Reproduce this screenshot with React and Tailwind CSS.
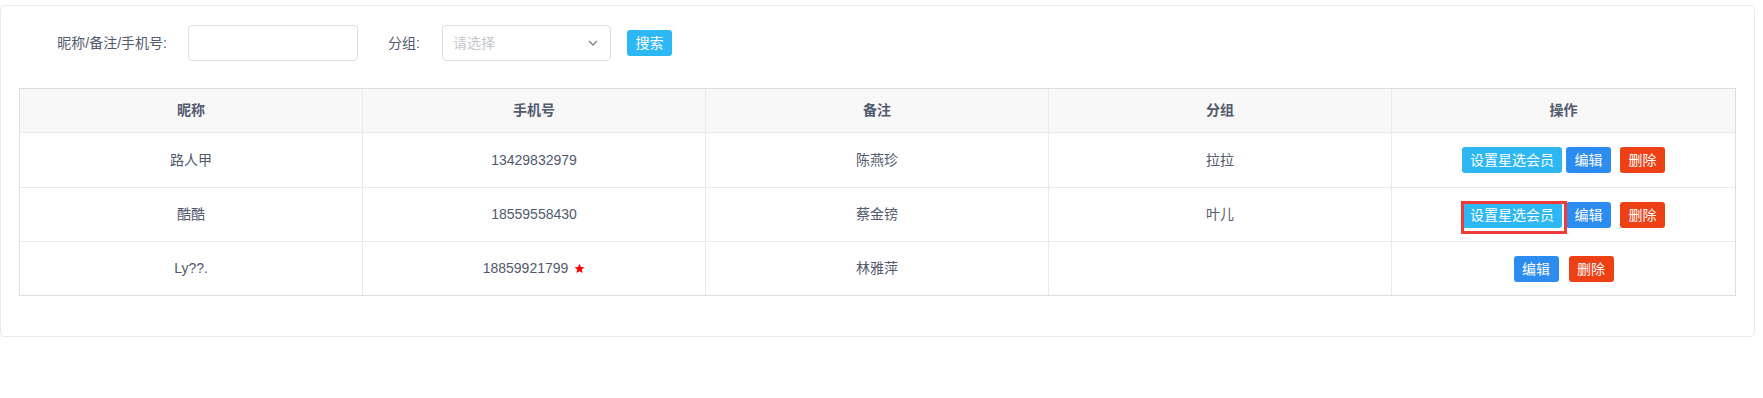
import { useState } from 'react'

const rows = [
  { nick: '路人甲', phone: '13429832979', note: '陈燕珍', group: '拉拉', star: false, setStar: true },
  { nick: '酷酷', phone: '18559558430', note: '蔡金镑', group: '叶儿', star: false, setStar: true, marked: true },
  { nick: 'Ly??.', phone: '18859921799', note: '林雅萍', group: '', star: true, setStar: false },
]

const rowHeights = ['h-[55px]', 'h-[54px]', 'h-[53px]']

const cols = ['昵称', '手机号', '备注', '分组', '操作']

const Star = () => (
  <svg viewBox="0 0 24 24" className="ml-[6px] inline-block h-[11px] w-[11px] align-[-1px]">
    <path fill="#ff0000" d="M12 1.5l3.1 7.1 7.7.7-5.8 5.1 1.7 7.6L12 18l-6.7 4 1.7-7.6-5.8-5.1 7.7-.7z" />
  </svg>
)

const Btn = ({ color, width, children, className = '' }) => (
  <button
    type="button"
    className={`inline-flex h-[26px] items-center justify-center rounded-[3px] text-[14px] leading-none text-white ${color} ${width} ${className}`}
  >
    {children}
  </button>
)

export default function App() {
  const [keyword, setKeyword] = useState('')

  return (
    <div className="min-h-[398px] bg-white pt-[5px] font-['Liberation_Sans','Noto_Sans_CJK_SC',sans-serif] text-[14px] text-[#515a6e]">
      <div className="h-[332px] w-[1755px] rounded-[4px] border border-[#e8eaec] bg-white px-[18px] pt-[19px]">
        {/* search bar */}
        <div className="flex h-[36px] items-center">
          <label className="w-[148px] text-right leading-none">昵称/备注/手机号:</label>
          <input
            value={keyword}
            onChange={(e) => setKeyword(e.target.value)}
            className="ml-[21px] h-[36px] w-[170px] rounded-[4px] border border-[#dcdee2] bg-white px-[10px] text-[14px] outline-none"
          />
          <label className="w-[62px] text-right leading-none">分组:</label>
          <div className="ml-[22px] flex h-[36px] w-[169px] items-center justify-between rounded-[4px] border border-[#dcdee2] bg-white pl-[10px] pr-[11px]">
            <span className="text-[14px] leading-none text-[#c5c8ce]">请选择</span>
            <svg viewBox="0 0 12 12" className="h-[12px] w-[12px]">
              <path d="M2 4l4 4 4-4" fill="none" stroke="#808695" strokeWidth="1.4" />
            </svg>
          </div>
          <Btn color="bg-[#2db7f5]" width="w-[45px]" className="ml-[16px]">
            搜索
          </Btn>
        </div>

        {/* table */}
        <div className="mt-[27px] w-[1717px] border border-[#dcdee2]">
          <table className="w-full table-fixed border-separate border-spacing-0">
            <thead>
              <tr className="h-[44px] bg-[#f8f8f9]">
                {cols.map((c, i) => (
                  <th
                    key={c}
                    className={`border-b border-[#e8eaec] text-center text-[14px] font-bold ${i < 4 ? 'border-r' : ''}`}
                  >
                    {c}
                  </th>
                ))}
              </tr>
            </thead>
            <tbody>
              {rows.map((r, ri) => {
                const last = ri === rows.length - 1
                const cell = `text-center ${last ? '' : 'border-b'} border-[#e8eaec]`
                return (
                  <tr key={r.phone} className={rowHeights[ri]}>
                    <td className={`${cell} border-r`}>{r.nick}</td>
                    <td className={`${cell} border-r`}>
                      {r.phone}
                      {r.star && <Star />}
                    </td>
                    <td className={`${cell} border-r`}>{r.note}</td>
                    <td className={`${cell} border-r`}>{r.group}</td>
                    <td className={cell}>
                      <div className="flex items-center justify-center">
                        {r.setStar && (
                          <span className="relative mr-[4px] inline-flex">
                            <Btn color="bg-[#2db7f5]" width="w-[100px]">
                              设置星选会员
                            </Btn>
                            {r.marked && (
                              <span className="pointer-events-none absolute -left-[1px] -top-[1px] z-10 h-[33px] w-[106px] border-[3px] border-[#f03a3a]" />
                            )}
                          </span>
                        )}
                        <Btn color="bg-[#2d8cf0]" width="w-[45px]">
                          编辑
                        </Btn>
                        <Btn color="bg-[#ed4014]" width="w-[45px]" className={r.setStar ? 'ml-[9px]' : 'ml-[10px]'}>
                          删除
                        </Btn>
                      </div>
                    </td>
                  </tr>
                )
              })}
            </tbody>
          </table>
        </div>
      </div>
    </div>
  )
}
